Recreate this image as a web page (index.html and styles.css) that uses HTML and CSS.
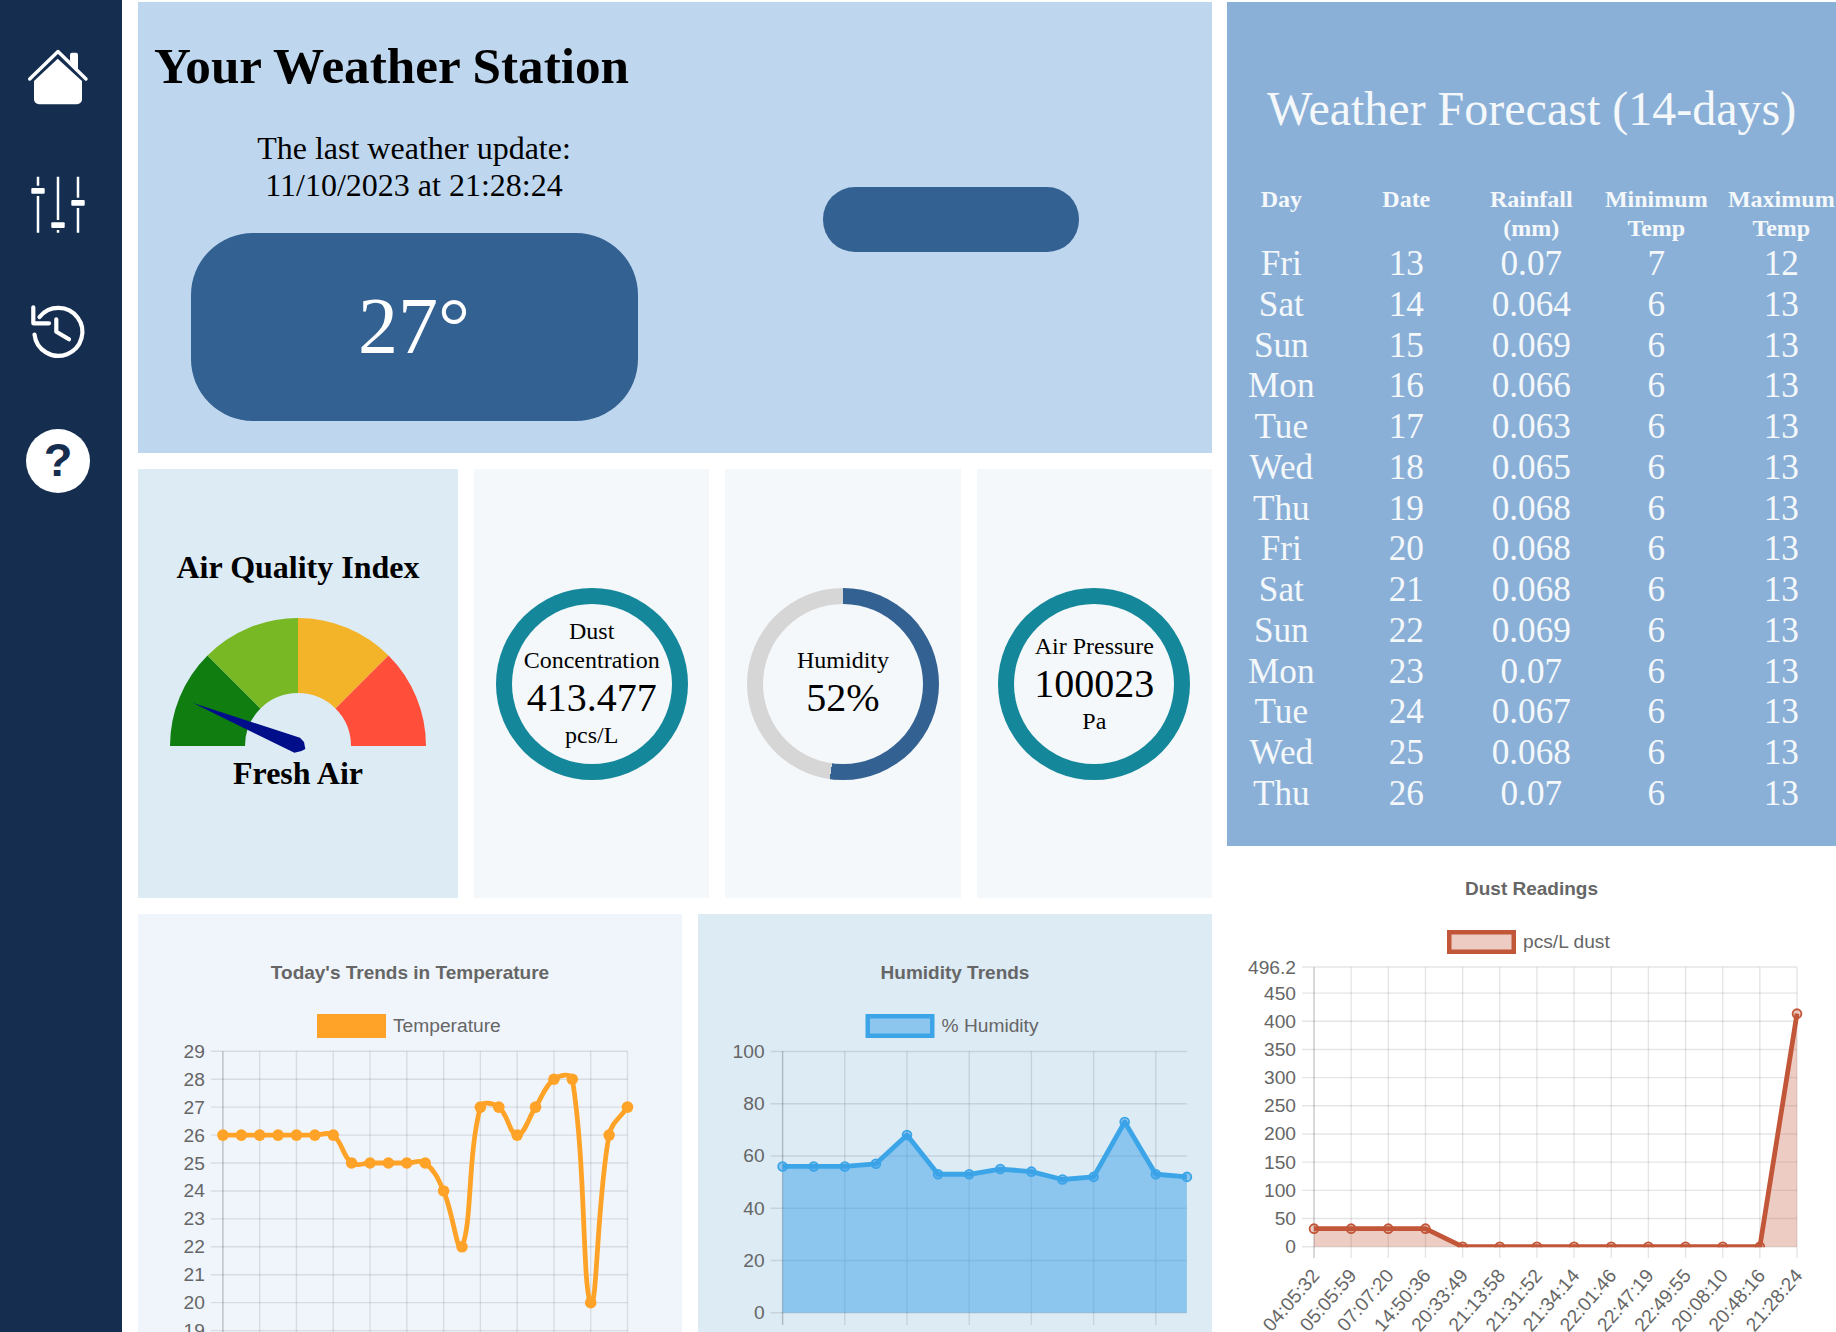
FILE: index.html
```html
<!DOCTYPE html>
<html lang="en">

<head>
    <meta charset="UTF-8">
    <meta name="viewport" content="width=device-width, initial-scale=1.0">
    <title>Your Weather Station</title>
    <link rel="stylesheet" href="styles.css">
</head>

<body>
    <nav class="sidebar">
        <a class="nav-icon" href="#">
            <svg width="64" height="64" viewBox="0 0 64 64">
                <path class="icon-line" d="M3.7 34 L32 6.5 L60 34" />
                <path class="icon-fill" d="M44 16 V9.7 a2 2 0 0 1 2 -2 h4 a2 2 0 0 1 2 2 V26 Z" />
                <path class="icon-fill" d="M31.7 13.7 L56 36 V54.3 a5 5 0 0 1 -5 5 H13 a5 5 0 0 1 -5 -5 V36 Z" />
            </svg>
        </a>
        <a class="nav-icon" href="#">
            <svg width="64" height="64" viewBox="0 0 64 64">
                <path class="icon-thin" d="M12 3.7 V12.7 M12 23 V59.7 M32 3.7 V47 M32 57 V59.7 M52 3.7 V24.7 M52 35 V59.7" />
                <rect class="icon-fill" x="5.3" y="15" width="13.4" height="5.7" rx="1" />
                <rect class="icon-fill" x="25.3" y="49.3" width="13.4" height="5.7" rx="1" />
                <rect class="icon-fill" x="45.3" y="27" width="13.4" height="5.7" rx="1" />
            </svg>
        </a>
        <a class="nav-icon" href="#">
            <svg width="64" height="64" viewBox="0 0 64 64">
                <path class="icon-line icon-bold" d="M8.5 33.5 A24 24 0 1 0 13.5 16" />
                <path class="icon-line icon-bold" d="M7.3 6.3 V22.3 H23" />
                <path class="icon-line icon-bold" d="M30.3 18.3 V30.7 L43 38.3" />
            </svg>
        </a>
        <a class="nav-help" href="#">?</a>
    </nav>

    <main class="dashboard">
        <section class="station">
            <div class="station-left">
                <h1>Your Weather Station</h1>
                <p class="last-update">The last weather update:<br>11/10/2023 at 21:28:24</p>
                <div class="temp-now">27°</div>
            </div>
            <div class="station-right">
                <div class="empty-pill"></div>
            </div>
        </section>

        <section class="readings">
            <div class="air-card">
                <h2>Air Quality Index</h2>
                <svg class="air-gauge" width="256" height="137" viewBox="0 0 256 137">
                    <path fill="#0f7d10" d="M0 128 A128 128 0 0 1 37.5 37.5 L90.5 90.5 A53 53 0 0 0 75 128 Z" />
                    <path fill="#78b824" d="M37.5 37.5 A128 128 0 0 1 128 0 V75 A53 53 0 0 0 90.5 90.5 Z" />
                    <path fill="#f4b42a" d="M128 0 A128 128 0 0 1 218.5 37.5 L165.5 90.5 A53 53 0 0 0 128 75 Z" />
                    <path fill="#ff4f3a" d="M218.5 37.5 A128 128 0 0 1 256 128 H181 A53 53 0 0 0 165.5 90.5 Z" />
                    <path fill="#000e8a" d="M23 85 L130 119.7 L134 124 L135.3 131 L131.5 133 L124.4 134.7 Z" />
                </svg>
                <div class="air-label">Fresh Air</div>
            </div>

            <div class="ring-card">
                <div class="ring ring-teal">
                    <div class="ring-inner">
                        <div class="ring-label">Dust<br>Concentration</div>
                        <div class="ring-value">413.477</div>
                        <div class="ring-label">pcs/L</div>
                    </div>
                </div>
            </div>

            <div class="ring-card">
                <div class="ring ring-humidity">
                    <div class="ring-inner">
                        <div class="ring-label">Humidity</div>
                        <div class="ring-value">52%</div>
                    </div>
                </div>
            </div>

            <div class="ring-card">
                <div class="ring ring-teal">
                    <div class="ring-inner">
                        <div class="ring-label">Air Pressure</div>
                        <div class="ring-value">100023</div>
                        <div class="ring-label">Pa</div>
                    </div>
                </div>
            </div>
        </section>

        <section class="trends">
            <div class="chart-box temp-box"><svg id="tempChart" width="544" height="418"></svg></div>
            <div class="chart-box humidity-box"><svg id="humidityChart" width="514" height="418"></svg></div>
        </section>
    </main>

    <aside class="side-column">
        <section class="forecast">
            <h2>Weather Forecast (14-days)</h2>
            <table class="forecast-table">
                <thead>
                    <tr>
                        <th>Day</th>
                        <th>Date</th>
                        <th>Rainfall<br>(mm)</th>
                        <th>Minimum<br>Temp</th>
                        <th>Maximum<br>Temp</th>
                    </tr>
                </thead>
                <tbody>
                    <tr><td>Fri</td><td>13</td><td>0.07</td><td>7</td><td>12</td></tr>
                    <tr><td>Sat</td><td>14</td><td>0.064</td><td>6</td><td>13</td></tr>
                    <tr><td>Sun</td><td>15</td><td>0.069</td><td>6</td><td>13</td></tr>
                    <tr><td>Mon</td><td>16</td><td>0.066</td><td>6</td><td>13</td></tr>
                    <tr><td>Tue</td><td>17</td><td>0.063</td><td>6</td><td>13</td></tr>
                    <tr><td>Wed</td><td>18</td><td>0.065</td><td>6</td><td>13</td></tr>
                    <tr><td>Thu</td><td>19</td><td>0.068</td><td>6</td><td>13</td></tr>
                    <tr><td>Fri</td><td>20</td><td>0.068</td><td>6</td><td>13</td></tr>
                    <tr><td>Sat</td><td>21</td><td>0.068</td><td>6</td><td>13</td></tr>
                    <tr><td>Sun</td><td>22</td><td>0.069</td><td>6</td><td>13</td></tr>
                    <tr><td>Mon</td><td>23</td><td>0.07</td><td>6</td><td>13</td></tr>
                    <tr><td>Tue</td><td>24</td><td>0.067</td><td>6</td><td>13</td></tr>
                    <tr><td>Wed</td><td>25</td><td>0.068</td><td>6</td><td>13</td></tr>
                    <tr><td>Thu</td><td>26</td><td>0.07</td><td>6</td><td>13</td></tr>
                </tbody>
            </table>
        </section>
        <div class="chart-box dust-box"><svg id="dustChart" width="609" height="471"></svg></div>
    </aside>

    <script src="charts.js"></script>
</body>

</html>
```

FILE: styles.css
```css
* {
    box-sizing: border-box;
}

html,
body {
    margin: 0;
    height: 1332px;
    overflow: hidden;
}

body {
    display: flex;
    background-color: #fff;
    color: #000;
    font-family: "Liberation Serif", "Times New Roman", serif;
}

/* left nav */
.sidebar {
    flex: 0 0 122px;
    display: flex;
    flex-direction: column;
    align-items: flex-start;
    gap: 64px;
    padding: 45px 0 0 26px;
    background-color: #152e50;
}

.nav-icon {
    display: block;
    height: 64px;
}

.icon-fill {
    fill: #fff;
}

.icon-line {
    fill: none;
    stroke: #fff;
    stroke-width: 3.4;
    stroke-linecap: round;
    stroke-linejoin: round;
}

.icon-bold {
    stroke-width: 4.2;
}

.icon-thin {
    fill: none;
    stroke: #fff;
    stroke-width: 2.5;
}

.nav-help {
    display: flex;
    align-items: center;
    justify-content: center;
    width: 64px;
    height: 64px;
    padding-bottom: 3px;
    border-radius: 50%;
    background-color: #fff;
    color: #152e50;
    font-family: "Liberation Sans", Arial, sans-serif;
    font-size: 47px;
    font-weight: bold;
    text-decoration: none;
}

/* middle column */
.dashboard {
    flex: 0 0 1074px;
    display: flex;
    flex-direction: column;
    gap: 16.5px;
    margin: 2px 0 0 16px;
}

.station {
    display: flex;
    height: 451px;
    background-color: #bfd7ee;
}

.station-left {
    flex: 0 0 552px;
    padding-top: 34.5px;
}

.station-left h1 {
    margin: 0 0 35.3px 16px;
    font-size: 51.2px;
    line-height: 58px;
}

.last-update {
    margin: 0 0 30px;
    font-size: 32px;
    line-height: 36.8px;
    text-align: center;
}

.temp-now {
    display: flex;
    align-items: center;
    justify-content: center;
    width: 447px;
    height: 188px;
    margin: 0 auto;
    padding-bottom: 2px;
    border-radius: 62px;
    background-color: #336192;
    color: #fff;
    font-size: 80px;
}

.station-right {
    flex: 1;
    display: flex;
    justify-content: center;
    padding-top: 185px;
}

.empty-pill {
    width: 256.5px;
    height: 64.5px;
    border-radius: 32px;
    background-color: #336192;
}

.readings {
    display: grid;
    grid-template-columns: 320px repeat(3, 1fr);
    gap: 16px;
    height: 428.5px;
}

.air-card {
    display: flex;
    flex-direction: column;
    align-items: center;
    padding-top: 80px;
    background-color: #ddebf5;
}

.air-card h2 {
    margin: 0 0 31.5px;
    font-size: 32px;
    line-height: 37px;
}

.air-gauge {
    display: block;
}

.air-label {
    font-size: 32px;
    font-weight: bold;
    line-height: 37px;
}

.ring-card {
    display: flex;
    align-items: center;
    justify-content: center;
    padding-top: 1px;
    background-color: #f4f8fa;
}

.ring {
    width: 192px;
    height: 192px;
    padding: 16px;
    border-radius: 50%;
}

.ring-teal {
    background-color: #14879b;
}

.ring-humidity {
    background: conic-gradient(#336192 0 52.2%, #d6d6d6 0);
}

.ring-inner {
    display: flex;
    flex-direction: column;
    align-items: center;
    justify-content: center;
    height: 100%;
    border-radius: 50%;
    background-color: #f4f8fa;
    text-align: center;
}

.ring-label {
    font-size: 24px;
    line-height: 29px;
}

.ring-value {
    font-size: 40px;
    line-height: 46px;
}

.trends {
    display: grid;
    grid-template-columns: 544px 514px;
    gap: 16px;
}

.chart-box svg {
    display: block;
}

.temp-box {
    height: 418px;
    background-color: #f0f5fc;
}

.humidity-box {
    height: 418px;
    background-color: #ddebf5;
}

/* right column */
.side-column {
    flex: 0 0 609px;
    display: flex;
    flex-direction: column;
    gap: 15.5px;
    margin: 2px 0 0 15.3px;
}

.forecast {
    height: 844px;
    padding-top: 79px;
    background-color: #8bb0d8;
    color: #f4f8fa;
}

.forecast h2 {
    margin: 0 8px 49px 0;
    font-size: 48px;
    font-weight: normal;
    line-height: 55px;
    text-align: center;
}

.forecast-table {
    width: 625px;
    margin-left: -8.5px;
    border-collapse: collapse;
    table-layout: fixed;
}

.forecast-table th {
    padding: 0 0 1.8px;
    font-size: 24px;
    line-height: 28.7px;
    vertical-align: top;
}

.forecast-table td {
    padding: 0;
    font-size: 35.2px;
    line-height: 40.75px;
    text-align: center;
}

/* chart text, drawn by charts.js */
.chart-title {
    fill: #666;
    font-family: "Liberation Sans", Arial, sans-serif;
    font-size: 19px;
    font-weight: bold;
    text-anchor: middle;
    dominant-baseline: central;
}

.chart-text {
    fill: #666;
    font-family: "Liberation Sans", Arial, sans-serif;
    font-size: 19.2px;
    dominant-baseline: central;
}

.tick-y {
    text-anchor: end;
}

.tick-x {
    text-anchor: end;
}
```

FILE: charts.js
```js
var NS = 'http://www.w3.org/2000/svg';

function el(parent, name, attrs, text) {
    var node = document.createElementNS(NS, name);
    for (var key in attrs) {
        node.setAttribute(key, attrs[key]);
    }
    if (text !== undefined) {
        node.textContent = text;
    }
    parent.appendChild(node);
    return node;
}

// same control points chart.js uses for its bezier lines
function smoothPath(pts, tension) {
    var ctrl = [];
    for (var i = 0; i < pts.length; i++) {
        var prev = pts[i - 1] || pts[i];
        var cur = pts[i];
        var next = pts[i + 1] || pts[i];
        var d01 = Math.hypot(cur.x - prev.x, cur.y - prev.y);
        var d12 = Math.hypot(next.x - cur.x, next.y - cur.y);
        var s01 = d01 / (d01 + d12) || 0;
        var s12 = d12 / (d01 + d12) || 0;
        ctrl.push({
            px: cur.x - tension * s01 * (next.x - prev.x),
            py: cur.y - tension * s01 * (next.y - prev.y),
            nx: cur.x + tension * s12 * (next.x - prev.x),
            ny: cur.y + tension * s12 * (next.y - prev.y)
        });
    }
    var d = 'M' + pts[0].x + ' ' + pts[0].y;
    for (var j = 1; j < pts.length; j++) {
        d += ' C' + ctrl[j - 1].nx + ' ' + ctrl[j - 1].ny + ' ' + ctrl[j].px + ' ' + ctrl[j].py + ' ' + pts[j].x + ' ' + pts[j].y;
    }
    return d;
}

function drawChart(id, c) {
    var svg = document.getElementById(id);
    var stepX = (c.right - c.left) / (c.values.length - 1);

    function yOf(v) {
        return c.zero - v * c.scale;
    }

    // title and legend
    el(svg, 'text', { 'class': 'chart-title', x: c.titleX, y: c.titleY }, c.title);
    el(svg, 'rect', {
        x: c.legendX + c.legendStroke / 2,
        y: c.legendY + c.legendStroke / 2,
        width: 69 - c.legendStroke,
        height: 24 - c.legendStroke,
        fill: c.legendFill,
        stroke: c.color,
        'stroke-width': c.legendStroke
    });
    el(svg, 'text', { 'class': 'chart-text', x: c.legendX + 76, y: c.legendY + 11 }, c.legend);

    // grid
    c.ticks.forEach(function (t) {
        var y = yOf(t.v);
        el(svg, 'line', { x1: c.left - 12, x2: c.right, y1: y, y2: y, stroke: 'rgba(0,0,0,0.1)', 'stroke-width': 1.4 });
        el(svg, 'text', { 'class': 'chart-text tick-y', x: c.left - 18, y: y }, t.label);
    });
    for (var i = 0; i < c.values.length; i += c.gridEvery) {
        var x = c.left + i * stepX;
        el(svg, 'line', {
            x1: x, x2: x, y1: c.top, y2: c.tickEnd,
            stroke: i === 0 ? 'rgba(0,0,0,0.22)' : 'rgba(0,0,0,0.1)',
            'stroke-width': 1.4
        });
    }

    var pts = c.values.map(function (v, n) {
        return { x: c.left + n * stepX, y: yOf(v) };
    });

    // line and points are cut off at the bottom of the plot, like the canvas clip
    var layer = el(svg, 'g', {});
    if (c.clipBottom) {
        var clip = el(svg, 'clipPath', { id: id + 'Clip' });
        el(clip, 'rect', { x: 0, y: 0, width: svg.getAttribute('width'), height: c.zero + 0.5 });
        layer.setAttribute('clip-path', 'url(#' + id + 'Clip)');
    }

    // filled area, then line, then points
    var line = c.tension ? smoothPath(pts, c.tension) : 'M' + pts.map(function (p) { return p.x + ' ' + p.y; }).join(' L');
    if (c.area) {
        el(layer, 'path', { d: line + ' L' + c.right + ' ' + c.zero + ' L' + c.left + ' ' + c.zero + ' Z', fill: c.area });
    }
    el(layer, 'path', { d: line, fill: 'none', stroke: c.color, 'stroke-width': c.lineWidth, 'stroke-linejoin': 'round' });
    pts.forEach(function (p) {
        el(layer, 'circle', { cx: p.x, cy: p.y, r: c.pointR, fill: c.pointFill, stroke: c.color, 'stroke-width': c.pointStroke });
    });

    // rotated time labels (only the dust chart has room for them on screen)
    if (c.times) {
        c.times.forEach(function (t, n) {
            var tx = c.left + n * stepX + 1.5;
            var ty = c.tickEnd + 14;
            el(svg, 'text', {
                'class': 'chart-text tick-x',
                x: tx,
                y: ty,
                transform: 'rotate(-49 ' + tx + ' ' + ty + ')'
            }, t);
        });
    }
}

function numberTicks(from, to, step) {
    var out = [];
    for (var v = from; v <= to; v += step) {
        out.push({ v: v, label: String(v) });
    }
    return out;
}

drawChart('tempChart', {
    title: "Today's Trends in Temperature",
    titleX: 272,
    titleY: 58,
    legend: 'Temperature',
    legendX: 179,
    legendY: 100,
    legendStroke: 0,
    legendFill: '#ffa328',
    color: '#ffa328',
    left: 84.9,
    right: 489.5,
    top: 137.3,
    tickEnd: 430,
    zero: 416.6 + 19 * 27.93,
    scale: 27.93,
    ticks: numberTicks(19, 29, 1),
    gridEvery: 2,
    tension: 0.4,
    lineWidth: 4.8,
    pointR: 5.8,
    pointFill: '#ffa328',
    pointStroke: 0,
    values: [26, 26, 26, 26, 26, 26, 26, 25, 25, 25, 25, 25, 24, 22, 27, 27, 26, 27, 28, 28, 20, 26, 27]
});

drawChart('humidityChart', {
    title: 'Humidity Trends',
    titleX: 257,
    titleY: 58,
    legend: '% Humidity',
    legendX: 167.5,
    legendY: 100,
    legendStroke: 4.5,
    legendFill: 'rgba(60,160,232,0.5)',
    color: '#3ba5e8',
    left: 84.6,
    right: 488.9,
    top: 137.3,
    tickEnd: 411,
    zero: 398.7,
    scale: 2.612,
    ticks: numberTicks(0, 100, 20),
    gridEvery: 2,
    tension: 0,
    area: 'rgba(60,160,232,0.5)',
    lineWidth: 4.8,
    pointR: 4.4,
    pointFill: 'rgba(60,160,232,0.5)',
    pointStroke: 1.8,
    values: [56, 56, 56, 57, 68, 53, 53, 55, 54, 51, 52, 73, 53, 52]
});

var dustTicks = numberTicks(0, 450, 50);
dustTicks.push({ v: 496.2, label: '496.2' });

drawChart('dustChart', {
    title: 'Dust Readings',
    titleX: 304.5,
    titleY: 27,
    legend: 'pcs/L dust',
    legendX: 220,
    legendY: 69,
    legendStroke: 4.5,
    legendFill: 'rgba(194,86,56,0.3)',
    color: '#c25638',
    left: 87,
    right: 570,
    top: 106.3,
    tickEnd: 397,
    zero: 385.7,
    scale: 0.5636,
    ticks: dustTicks,
    gridEvery: 1,
    tension: 0,
    clipBottom: true,
    area: 'rgba(194,86,56,0.3)',
    lineWidth: 4.8,
    pointR: 4.4,
    pointFill: 'rgba(194,86,56,0.3)',
    pointStroke: 1.8,
    values: [32, 32, 32, 32, 0, 0, 0, 0, 0, 0, 0, 0, 0, 413.477],
    times: ['04:05:32', '05:05:59', '07:07:20', '14:50:36', '20:33:49', '21:13:58', '21:31:52', '21:34:14', '22:01:46', '22:47:19', '22:49:55', '20:08:10', '20:48:16', '21:28:24']
});
```
